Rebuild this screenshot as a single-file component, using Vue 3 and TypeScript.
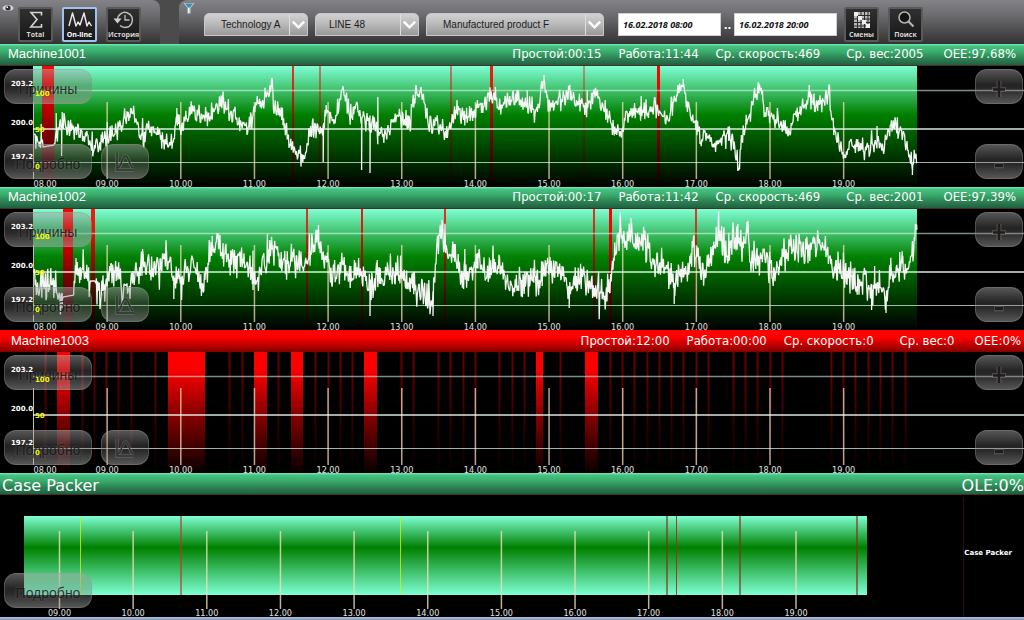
<script setup lang="ts">
import { ref } from 'vue'

type Point = [number, number]
interface Stop { x: number; w: number; o: number }
interface Machine {
  name: string
  alarm: boolean
  stats: string[]
  running: boolean
  stops: Stop[]
  trace: string
}

const W = 1024
const pct = (x: number) => `${(x / W) * 100}%`

const technology = ref('Technology A')
const line = ref('LINE 48')
const product = ref('Manufactured product F')
const from = ref('16.02.2018 08:00')
const to = ref('16.02.2018 20:00')

const hours = ['08.00', '09.00', '10.00', '11.00', '12.00', '13.00', '14.00', '15.00', '16.00', '17.00', '18.00', '19.00']
const machineTicks = hours.map((label, i) => ({ label, x: 33.5 + i * 73.65 }))
const packerTicks = hours.slice(1).map((label, i) => ({ label, x: 59.5 + i * 73.65 }))

// Fills the trend between key points with deterministic sensor noise.
function buildTrace(keys: Point[], spikes: Point[], top: number, amp: number, quiet: Point[], seed: number): string {
  let s = seed
  const rnd = () => {
    s = (s * 16807) % 2147483647
    return s / 2147483647
  }
  const out: Point[] = []
  let k = 0
  const last = keys[keys.length - 1][0]
  for (let x = keys[0][0]; x <= last; x += 0.6) {
    while (k < keys.length - 2 && keys[k + 1][0] < x) k++
    const [x0, y0] = keys[k]
    const [x1, y1] = keys[k + 1]
    const base = y0 + ((y1 - y0) * (x - x0)) / (x1 - x0)
    const calm = quiet.some(q => x >= q[0] && x <= q[1])
    const noise = (rnd() + rnd() - 1) * amp * (rnd() > 0.92 ? 1.6 : 1)
    out.push([x, calm ? base : base + noise])
    const spike = spikes.find(p => Math.abs(p[0] - x) <= 0.3)
    if (spike) out.push([x, spike[1]], [x + 0.3, base])
  }
  return out.map(p => `${p[0].toFixed(1)},${(p[1] - top).toFixed(1)}`).join(' ')
}

const keys1: Point[] = [[34, 135], [38, 141], [41, 142], [43, 147], [54, 145], [56, 138], [60, 130], [62, 124], [65, 122], [72, 129], [78, 130], [84, 137], [90, 141], [95, 145], [100, 142], [105, 137], [110, 132], [118, 132], [120, 127], [123, 118], [126, 113], [133, 113], [136, 118], [139, 128], [143, 138], [148, 131], [153, 128], [157, 132], [160, 138], [166, 143], [172, 142], [175, 125], [177, 120], [180, 125], [185, 122], [190, 115], [196, 113], [205, 118], [212, 115], [218, 107], [222, 102], [228, 110], [235, 115], [242, 124], [248, 127], [253, 118], [257, 100], [262, 102], [268, 92], [272, 84], [274, 108], [282, 112], [286, 130], [290, 140], [297, 150], [302, 160], [305, 152], [310, 135], [315, 131], [322, 130], [325, 118], [330, 119], [335, 121], [339, 105], [341, 94], [346, 97], [350, 115], [354, 112], [357, 104], [361, 118], [365, 120], [370, 123], [376, 126], [380, 135], [384, 136], [388, 129], [394, 122], [397, 117], [403, 120], [410, 120], [413, 101], [416, 94], [422, 96], [425, 108], [430, 122], [436, 123], [442, 128], [446, 133], [450, 126], [456, 112], [460, 111], [465, 117], [472, 112], [480, 107], [485, 103], [489, 93], [494, 94], [501, 107], [508, 100], [515, 97], [522, 104], [530, 103], [537, 112], [541, 93], [544, 82], [546, 100], [552, 106], [560, 102], [567, 93], [573, 98], [580, 106], [587, 108], [592, 102], [597, 95], [600, 105], [606, 112], [612, 126], [618, 129], [622, 134], [627, 113], [635, 111], [643, 110], [650, 114], [657, 107], [663, 117], [667, 118], [674, 103], [679, 90], [683, 86], [685, 102], [690, 112], [695, 127], [702, 138], [708, 135], [714, 148], [718, 140], [724, 133], [728, 135], [733, 142], [739, 162], [742, 137], [748, 120], [754, 98], [757, 91], [762, 90], [765, 112], [772, 117], [780, 127], [788, 129], [795, 118], [803, 103], [809, 97], [814, 104], [820, 105], [826, 92], [829, 87], [831, 115], [837, 138], [843, 155], [848, 148], [855, 142], [862, 148], [870, 148], [877, 142], [883, 148], [890, 130], [896, 127], [903, 134], [909, 155], [912, 165], [915, 152], [917, 155]]
const spikes1: Point[] = [[41, 124], [56, 113], [61.5, 156], [62.5, 112], [107, 122], [177, 108], [272, 78], [323.5, 162], [361.5, 170], [370, 173], [378, 97], [527, 90], [544, 75], [587, 90], [683, 79], [739.5, 169], [809, 85], [877, 126], [912.5, 175]]
const keys2: Point[] = [[34, 280], [38, 285], [43, 290], [50, 280], [55, 284], [59, 298], [63, 297], [74, 295], [75, 272], [80, 267], [84, 275], [88, 281], [95, 281], [98, 290], [103, 292], [109, 277], [114, 272], [118, 275], [124, 290], [130, 276], [138, 273], [143, 263], [150, 272], [158, 262], [165, 257], [170, 265], [174, 280], [182, 278], [188, 268], [193, 263], [198, 283], [204, 285], [208, 266], [212, 246], [218, 245], [224, 258], [230, 262], [238, 260], [246, 264], [252, 275], [256, 280], [262, 262], [270, 257], [277, 253], [284, 265], [290, 257], [298, 263], [304, 266], [307, 257], [311, 250], [315, 240], [318, 230], [321, 255], [326, 262], [331, 275], [338, 272], [345, 268], [352, 278], [360, 273], [367, 282], [371, 290], [376, 270], [382, 285], [390, 267], [395, 278], [400, 272], [406, 285], [413, 288], [420, 293], [428, 295], [433, 300], [436, 255], [442, 230], [445, 245], [450, 265], [454, 254], [460, 274], [468, 270], [475, 268], [478, 258], [486, 272], [494, 260], [500, 272], [505, 272], [512, 285], [520, 284], [528, 282], [534, 275], [539, 290], [543, 270], [550, 268], [558, 266], [565, 275], [570, 295], [575, 278], [582, 278], [590, 280], [596, 292], [602, 295], [609, 287], [612, 262], [616, 245], [620, 235], [625, 250], [631, 232], [634, 248], [640, 242], [645, 242], [651, 262], [656, 265], [662, 262], [668, 270], [674, 285], [680, 275], [688, 270], [694, 250], [700, 268], [706, 272], [712, 250], [718, 235], [724, 245], [727, 265], [733, 238], [738, 238], [743, 248], [746, 234], [748, 232], [751, 268], [758, 262], [763, 250], [768, 265], [775, 270], [782, 258], [790, 250], [797, 245], [805, 250], [812, 242], [818, 245], [826, 248], [833, 270], [840, 268], [846, 273], [852, 280], [858, 288], [864, 283], [872, 290], [878, 285], [882, 293], [886, 296], [890, 275], [898, 272], [903, 262], [908, 275], [913, 245], [917, 228]]
const spikes2: Point[] = [[62, 308], [76, 258], [143, 254], [174, 299], [212, 236], [218, 233], [253, 290], [318.5, 225], [370, 316], [377, 260], [433, 316], [454, 244], [465, 249], [478, 253], [569, 308], [631, 218], [674, 304], [716.5, 230], [747, 222], [871.5, 310], [874.5, 266], [886, 313], [902.5, 255], [916.5, 225]]

const bars = (list: number[][]): Stop[] => list.map(([x, w, o = 1]) => ({ x, w, o }))
const brief = [45, 82, 94.5, 106.5, 118.5, 131.5, 155.5, 229.5, 242, 278.5, 315.5, 328, 340, 352.5, 401.5, 413.5, 438, 450.5, 463, 475, 499.5, 512, 524, 560.5, 610, 622.5, 634.5, 647, 659.5, 671.5, 683.5, 696.5, 708, 733, 745, 757.5, 770, 782, 831, 843.5, 855.5, 868, 880.5, 892.5, 905]

const machines: Machine[] = [
  {
    name: 'Machine1001', alarm: false, running: true,
    stats: ['Простой:00:15', 'Работа:11:44', 'Ср. скорость:469', 'Ср. вес:2005', 'OEE:97.68%'],
    stops: bars([[42, 12], [292, 2, 0.8], [319, 2, 0.5], [450, 2, 0.5], [490, 3, 0.9], [583, 2, 0.4], [657, 3]]),
    trace: buildTrace(keys1, spikes1, 66, 12, [[43, 54.5], [659, 663]], 4211),
  },
  {
    name: 'Machine1002', alarm: false, running: true,
    stats: ['Простой:00:17', 'Работа:11:42', 'Ср. скорость:469', 'Ср. вес:2001', 'OEE:97.39%'],
    stops: bars([[63, 10], [91, 4, 0.9], [306, 2, 0.8], [361, 2, 0.9], [444, 2, 0.8], [593, 2, 0.8], [609, 3], [695, 2, 0.75]]),
    trace: buildTrace(keys2, spikes2, 209, 19, [[63, 74], [90, 96]], 977),
  },
  {
    name: 'Machine1003', alarm: true, running: false,
    stats: ['Простой:12:00', 'Работа:00:00', 'Ср. скорость:0', 'Ср. вес:0', 'OEE:0%'],
    stops: bars([[57, 13], [168, 37], [254, 13], [291, 12], [364, 13], [536, 7], [585, 13], ...brief.map(x => [Math.floor(x) - 0.5, 2, 0.4])]),
    trace: '',
  },
]

const packerMarks = [
  { x: 80, w: 1, color: '#d8f000', o: 0.8 },
  { x: 180, w: 2, color: '#c83020', o: 0.6 },
  { x: 400, w: 1, color: '#d8f000', o: 0.8 },
  { x: 666, w: 2, color: '#902810', o: 0.6 },
  { x: 676, w: 1, color: '#b02810', o: 0.9 },
  { x: 739, w: 2, color: '#902810', o: 0.6 },
  { x: 856, w: 2, color: '#902810', o: 0.6 },
]
</script>

<template>
  <main class="monitor">
    <header class="toolbar">
      <nav class="bar views">
        <svg class="eye" viewBox="0 0 12 8" aria-hidden="true">
          <ellipse cx="6" cy="4" rx="5.5" ry="3" fill="#d8d8d8" />
          <circle cx="6" cy="4" r="2.6" fill="#303030" />
          <circle cx="5.2" cy="3.2" r="0.9" fill="#fff" />
        </svg>
        <button type="button" class="tool">
          <svg viewBox="0 0 30 22" aria-hidden="true">
            <path d="M20.500 6.500V3.500H10l6 7L9.800 18H20.500V15" fill="none" stroke="#d4d4d4" stroke-width="1.600" />
          </svg>
          <span>Total</span>
        </button>
        <button type="button" class="tool active">
          <svg viewBox="0 0 30 22" aria-hidden="true">
            <path d="M4 17 7.500 4l3.500 13 2-4 2 3 4-12 3 13 2-4 2.500 4" fill="none" stroke="#ececec" stroke-width="1.400" stroke-linejoin="round" />
          </svg>
          <span>On-line</span>
        </button>
        <button type="button" class="tool">
          <svg viewBox="0 0 30 22" aria-hidden="true">
            <path d="M8.500 10.500A7.500 7.500 0 1 1 11 16.500" fill="none" stroke="#bdbdbd" stroke-width="1.500" />
            <path d="M4.500 9.500h8l-4 5z" fill="#d0d0d0" />
            <path d="M16 6v5h4.500" fill="none" stroke="#bdbdbd" stroke-width="1.300" />
          </svg>
          <span>История</span>
        </button>
      </nav>
      <form class="bar filters" @submit.prevent>
        <svg class="funnel" viewBox="0 0 12 12" aria-hidden="true">
          <path d="M.5 1h11L7.500 6v5.500h-3V6z" fill="#b9d4de" />
          <path d="M2 1.500h8L7 5.500H5z" fill="#3d8fae" />
          <path d="M5.500 6v5" stroke="#eef6f8" stroke-width="1" />
        </svg>
        <label class="pick narrow">
          <select v-model="technology" aria-label="Technology" class="deep"><option>Technology A</option></select>
          <svg viewBox="0 0 18 20" aria-hidden="true"><path d="M3 7l6 6 6-6" fill="none" stroke="#fff" stroke-width="2.600" /></svg>
        </label>
        <label class="pick narrow">
          <select v-model="line" aria-label="Line"><option>LINE 48</option></select>
          <svg viewBox="0 0 18 20" aria-hidden="true"><path d="M3 7l6 6 6-6" fill="none" stroke="#fff" stroke-width="2.600" /></svg>
        </label>
        <label class="pick wide">
          <select v-model="product" aria-label="Product" class="deep"><option>Manufactured product F</option></select>
          <svg viewBox="0 0 18 20" aria-hidden="true"><path d="M3 7l6 6 6-6" fill="none" stroke="#fff" stroke-width="2.600" /></svg>
        </label>
        <div class="period">
          <input v-model="from" type="text" aria-label="From">
          <span class="dots">..</span>
          <input v-model="to" type="text" aria-label="To">
        </div>
        <button type="button" class="tool">
          <svg viewBox="0 0 30 22" aria-hidden="true">
            <rect x="7" y="3" width="16" height="16" fill="#b8b8b8" />
            <path d="M10.500 3v16M14 3v16M17.500 3v16M21 3v16M7 6.500h16M7 10h16M7 13.500h16M7 17h16" stroke="#2a2a2a" stroke-width="1" />
            <path d="M7 3h4v4H7zM11 7h4v4h-4zM15 11h4v4h-4zM19 15h4v4h-4z" fill="#f0f0f0" />
          </svg>
          <span>Смены</span>
        </button>
        <button type="submit" class="tool">
          <svg viewBox="0 0 30 22" aria-hidden="true">
            <circle cx="13.500" cy="8.500" r="5.500" fill="#141414" stroke="#b4b4b4" stroke-width="1.500" />
            <path d="M17.500 12.500l5 5" stroke="#b4b4b4" stroke-width="2.200" />
          </svg>
          <span>Поиск</span>
        </button>
      </form>
    </header>

    <section v-for="m in machines" :key="m.name" class="panel">
      <div class="title" :class="{ alarm: m.alarm }">
        <h2>{{ m.name }}</h2>
        <ul class="stats">
          <li v-for="s in m.stats" :key="s">{{ s }}</li>
        </ul>
      </div>
      <div class="chart">
        <svg class="plot" viewBox="0 0 1024 121" preserveAspectRatio="none" aria-hidden="true">
          <defs>
            <linearGradient :id="`run-${m.name}`" x1="0" y1="0" x2="0" y2="1">
              <stop offset="0" stop-color="#7fffd4" />
              <stop offset="0.4" stop-color="#008000" />
              <stop offset="1" stop-color="#000000" />
            </linearGradient>
            <linearGradient :id="`stop-${m.name}`" x1="0" y1="0" x2="0" y2="1">
              <stop offset="0" stop-color="#ff0000" />
              <stop offset="0.15" stop-color="#fa0000" />
              <stop offset="0.5" stop-color="#8c0000" />
              <stop offset="1" stop-color="#080000" />
            </linearGradient>
          </defs>
          <rect v-if="m.running" x="33" y="0" width="884" height="121" :fill="`url(#run-${m.name})`" />
          <rect v-for="(s, i) in m.stops" :key="i" :x="s.x" y="0" :width="s.w" height="121" :opacity="s.o" :fill="`url(#stop-${m.name})`" />
          <path d="M33.500 36V113" stroke="#c9c0a8" stroke-width="1" />
          <path v-for="t in machineTicks.slice(1)" :key="t.label" :d="`M${t.x} 36V113`" stroke="#f0deb8" stroke-opacity="0.75" stroke-width="1.5" />
          <path d="M33 24.500H1024" stroke="#e4fff4" stroke-opacity="0.55" stroke-width="1.500" />
          <path d="M33 63H1024" stroke="#f0fff8" stroke-opacity="0.9" stroke-width="1.500" />
          <path d="M33 96.500H1024" stroke="#e4fff4" stroke-opacity="0.7" stroke-width="1.200" />
          <polyline v-if="m.trace" :points="m.trace" fill="none" stroke="#f5f5f5" stroke-width="1.3" stroke-linejoin="bevel" />
        </svg>
        <div class="keys">
          <button type="button" class="glass wordy">Причины</button>
          <button type="button" class="glass sign end" aria-label="Увеличить">
            <svg viewBox="0 0 20 20" aria-hidden="true"><path d="M10 2v16M3 10.500h14" stroke="#8f8888" stroke-opacity="0.35" stroke-width="5" /><path d="M10 2v16M4 10.500h12" stroke="#201c1c" stroke-width="2.500" /></svg>
          </button>
          <button type="button" class="glass wordy">Подробно</button>
          <button type="button" class="glass sign curve" aria-label="Распределение">
            <svg viewBox="0 0 20 20" aria-hidden="true"><path d="M2 1v17h17M3 16c4-2 4-12 7.500-12S14 14 18 16" fill="none" stroke="#c0c0c0" stroke-opacity="0.25" stroke-width="3.500" /><path d="M2 1v17h17M3 16c4-2 4-12 7.500-12S14 14 18 16" fill="none" stroke="#303030" stroke-width="1.500" /></svg>
          </button>
          <button type="button" class="glass sign end" aria-label="Уменьшить">
            <svg viewBox="0 0 20 20" aria-hidden="true"><path d="M5 11.500h10" stroke="#8f8888" stroke-opacity="0.3" stroke-width="6" /><path d="M6 11.500h8" stroke="#201c1c" stroke-width="3" /></svg>
          </button>
        </div>
        <span class="level high">203.2</span>
        <span class="level mid">200.0</span>
        <span class="level low">197.2</span>
        <span class="scale high">100</span>
        <span class="scale mid">50</span>
        <span class="scale low">0</span>
        <span v-for="(t, i) in machineTicks" :key="t.label" class="hour" :class="{ first: i === 0 }" :style="{ left: pct(t.x) }">{{ t.label }}</span>
      </div>
    </section>

    <section class="panel">
      <div class="title large">
        <h2>Case Packer</h2>
        <p>OLE:0%</p>
      </div>
      <div class="chart packer">
        <svg class="plot" viewBox="0 0 1024 122" preserveAspectRatio="none" aria-hidden="true">
          <defs>
            <linearGradient id="packer-run" x1="0" y1="0" x2="0" y2="1">
              <stop offset="0" stop-color="#7fffd4" />
              <stop offset="0.4" stop-color="#008000" />
              <stop offset="1" stop-color="#7fffd4" />
            </linearGradient>
          </defs>
          <rect x="24" y="21" width="843" height="79" fill="url(#packer-run)" />
          <rect v-for="k in packerMarks" :key="k.x" :x="k.x" y="21" :width="k.w" height="79" :fill="k.color" :opacity="k.o" />
          <path v-for="t in packerTicks" :key="t.label" :d="`M${t.x} 36V114`" stroke="#f0deb8" stroke-opacity="0.8" stroke-width="1.500" />
          <path d="M963.500 2V122" stroke="#241010" stroke-width="1" />
        </svg>
        <div class="keys">
          <button type="button" class="glass wordy lower">Подробно</button>
        </div>
        <span class="unit">Case Packer</span>
        <span v-for="t in packerTicks" :key="t.label" class="hour" :style="{ left: pct(t.x) }">{{ t.label }}</span>
      </div>
    </section>
    <footer class="edge"></footer>
  </main>
</template>

<style>
body {
  margin: 0;
  background: #000;
}
</style>

<style scoped>
.monitor {
  display: flex;
  flex-direction: column;
  min-height: 100vh;
  overflow: hidden;
  background: #000;
  color: #fff;
  font-family: "DejaVu Sans", sans-serif;
}
.monitor * {
  box-sizing: border-box;
}
.toolbar {
  display: flex;
  gap: 19px;
  height: 44px;
  background: #4b4b4b;
}
.bar {
  position: relative;
  display: flex;
  background: linear-gradient(#838387, #6c6c70 35%, #4c4c4e 70%, #333);
}
.views {
  width: 160px;
  padding: 7px 0 0 18px;
  gap: 9px;
  border-radius: 0 8px 0 0;
}
.filters {
  flex: 1;
  padding: 7px 0 0 25px;
  border-radius: 8px 0 0 0;
}
.eye {
  position: absolute;
  left: 2px;
  top: 4px;
  width: 12px;
  height: 8px;
}
.funnel {
  position: absolute;
  left: 4px;
  top: 2px;
  width: 12px;
  height: 12px;
}
.tool {
  display: flex;
  flex-direction: column;
  align-items: center;
  width: 35px;
  height: 35px;
  padding: 0;
  border: 2px solid #5a5a5c;
  border-radius: 2px;
  background: linear-gradient(#303030, #161616);
  color: #d4d4d4;
  font: bold 7px/8px "Open Sans", "Noto Sans", sans-serif;
}
.tool svg {
  width: 30px;
  height: 22px;
}
.tool.active {
  border-color: #9dc3ee;
  color: #fff;
}
.pick {
  position: relative;
  height: 23px;
  margin: 6px 7px 0 0;
}
.pick.narrow {
  width: 104px;
}
.pick.wide {
  width: 178px;
  margin-right: 14px;
}
.pick select {
  display: block;
  width: 100%;
  height: 23px;
  padding: 0 20px 0 13px;
  border: 1px solid #c8c8c8;
  border-radius: 5px 5px 0 0;
  background: linear-gradient(#d2d2d2, #b8b8b8 50%, #989898);
  color: #1c1c1c;
  font: 10px/20px "Liberation Sans", Arial, sans-serif;
  appearance: none;
}
.pick select.deep {
  padding-left: 16px;
}
.pick svg {
  position: absolute;
  right: 1px;
  top: 1px;
  width: 18px;
  height: 21px;
  border-left: 1px solid #dedede;
  pointer-events: none;
}
.period {
  display: flex;
  gap: 3px;
  margin: 6px 7px 0 0;
}
.period input {
  width: 103px;
  height: 23px;
  padding: 0 4px;
  border: 1px solid #d0d0d0;
  background: #fff;
  color: #111;
  font: italic bold 9px/20px "Open Sans", "Noto Sans", sans-serif;
}
.dots {
  display: flex;
  justify-content: center;
  width: 7px;
  font: bold 10px/26px "DejaVu Sans", sans-serif;
}
.filters .tool + .tool {
  margin-left: 9px;
}
.title {
  display: flex;
  align-items: center;
  justify-content: space-between;
  height: 22px;
  padding: 0 8px 2px 8px;
  border-bottom: 1px solid #4a3020;
  background: linear-gradient(#78e8b8, #45c080 12%, #3aae6e 35%, #2e8655 65%, #1f6040);
}
.title h2 {
  margin: 0;
  font: 13px/18px "Liberation Sans", Arial, sans-serif;
}
.title.alarm {
  padding: 0 3px 0 11px;
  border-bottom-color: #8a0000;
  background: linear-gradient(#f00, #f00 35%, #8b0000);
}
.stats {
  display: flex;
  margin: 0;
  padding: 0;
  list-style: none;
  font: 13px/18px "DejaVu Sans Condensed", "Noto Sans", sans-serif;
}
.stats li {
  margin-left: 17px;
}
.stats li:nth-child(4) {
  margin-left: 26px;
}
.stats li:nth-child(5) {
  margin-left: 20px;
}
.title.large {
  padding: 4px 0 0 2px;
}
.title.large h2,
.title.large p {
  margin: 0;
  font: 16px/18px "DejaVu Sans", sans-serif;
}
.chart {
  position: relative;
  height: 121px;
  overflow: hidden;
}
.chart.packer {
  height: 122px;
}
.plot {
  position: absolute;
  inset: 0;
  width: 100%;
  height: 100%;
}
.keys {
  position: relative;
  display: grid;
  grid-template-columns: 88px 48px 1fr;
  grid-template-rows: 35px 35px;
  gap: 40px 9px;
  padding: 3px 1px 0 4px;
}
.glass {
  height: 35px;
  padding: 4px 0 0;
  border: 1px solid rgba(150, 150, 150, 0.35);
  border-radius: 12px;
  background: linear-gradient(rgba(170, 170, 170, 0.5), rgba(110, 110, 110, 0.32) 45%, rgba(120, 120, 120, 0.35) 60%, rgba(170, 170, 170, 0.5));
  color: rgba(16, 16, 16, 0.8);
  font: 14px/28px "Liberation Sans", Arial, sans-serif;
  text-shadow: 0 0 3px rgba(200, 200, 200, 0.35);
}
.wordy {
  grid-column: 1;
}
.wordy.lower {
  grid-row: 2;
}
.sign {
  display: flex;
  align-items: center;
  justify-content: center;
  width: 48px;
}
.sign.curve {
  padding: 0;
}
.sign svg {
  width: 20px;
  height: 20px;
}
.end {
  grid-column: 3;
  justify-self: end;
}
.level,
.scale,
.hour,
.unit {
  position: absolute;
  pointer-events: none;
  white-space: nowrap;
}
.level,
.scale,
.unit {
  font: bold 7px/8px "DejaVu Sans", sans-serif;
}
.level {
  left: 11px;
}
.scale {
  left: 35px;
  color: #f4f400;
}
.level.high {
  top: 14px;
}
.level.mid {
  top: 53px;
}
.level.low {
  top: 87px;
}
.scale.high {
  top: 24px;
}
.scale.mid {
  top: 60px;
}
.scale.low {
  top: 97px;
}
.hour {
  bottom: -2px;
  color: #e0e0e0;
  font: 9px/9px "DejaVu Sans Condensed", "Noto Sans", sans-serif;
  transform: translateX(-50%);
}
.packer .hour {
  bottom: -1px;
}
.hour.first {
  transform: none;
}
.unit {
  right: 12px;
  top: 54px;
}
.edge {
  height: 3px;
  background: linear-gradient(#b4c4d8, #7f98b8);
}
</style>
